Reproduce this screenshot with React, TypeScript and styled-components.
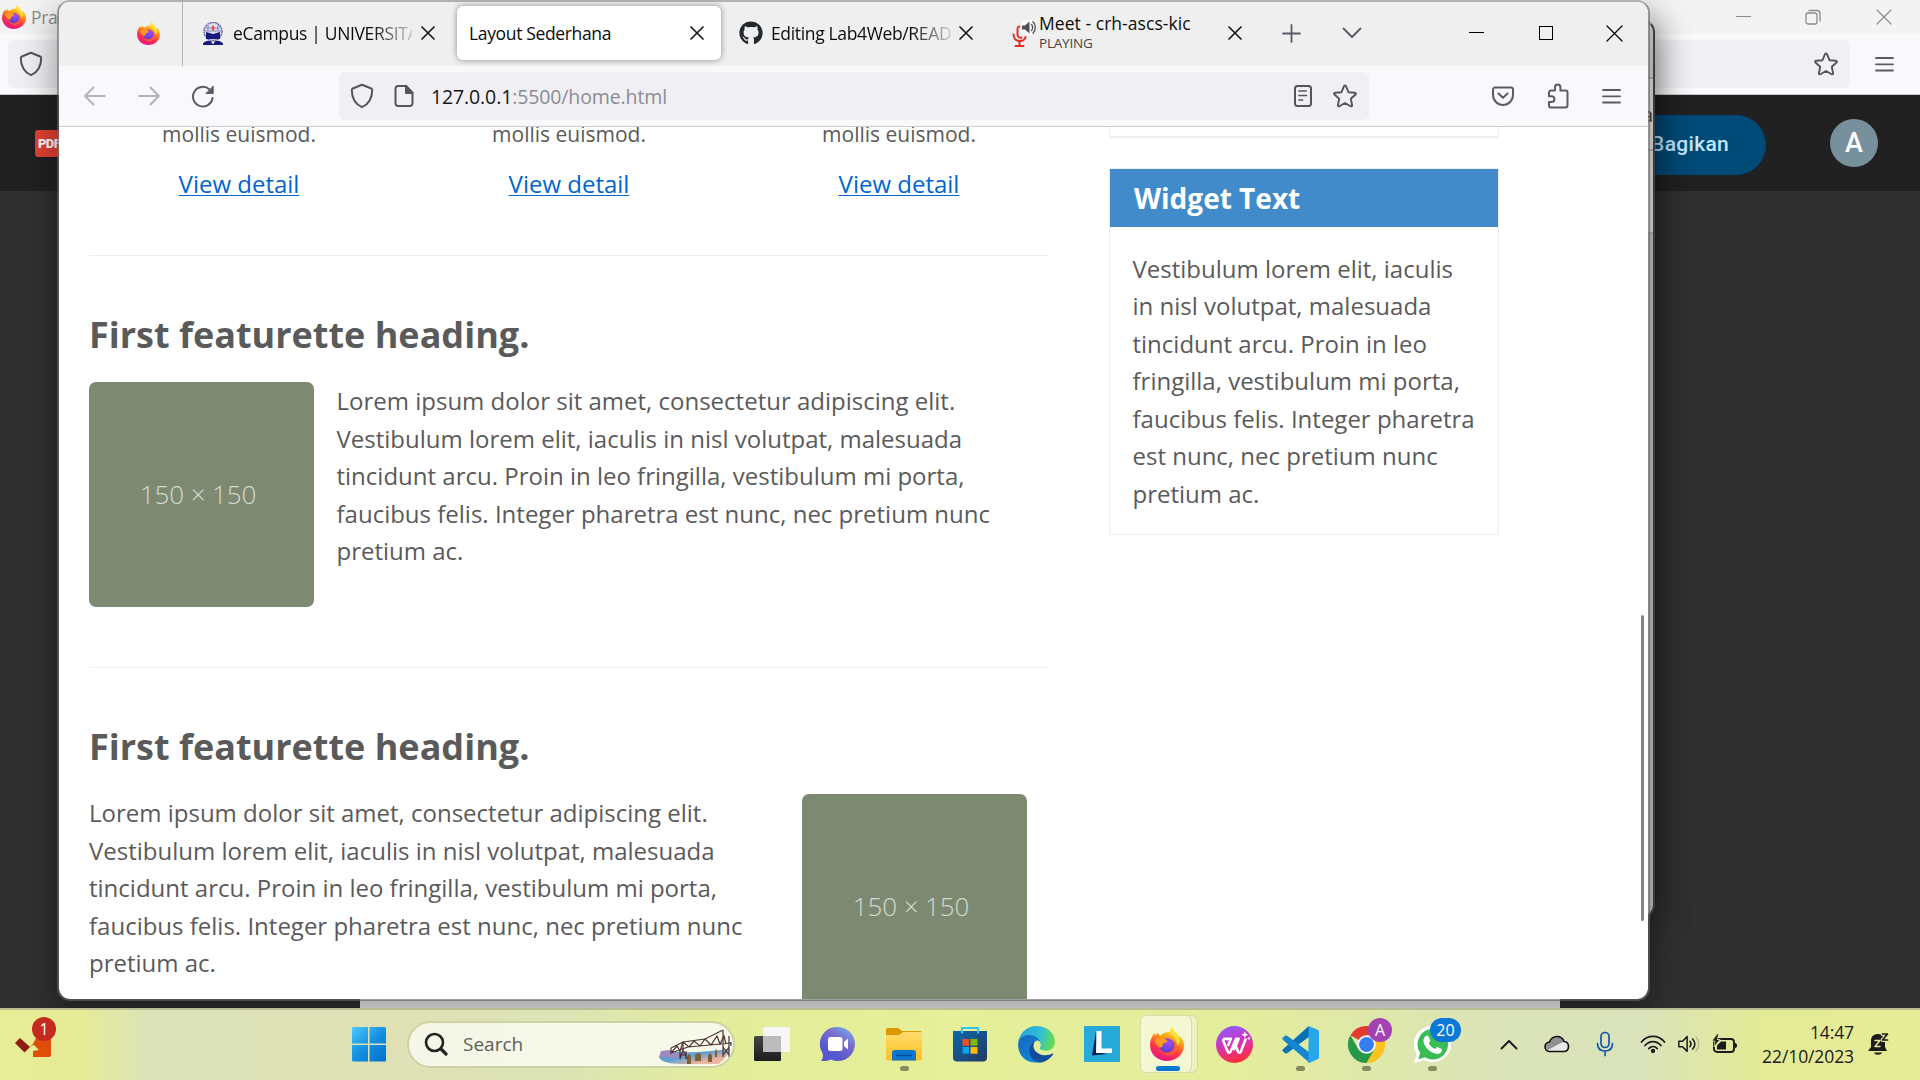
import React from "react";
import styled, { createGlobalStyle } from "styled-components";
import { FaGithub } from "react-icons/fa";

const GlobalStyle = createGlobalStyle`
  * { box-sizing: border-box; }
  body { margin: 0; overflow: hidden; }
`;

const ui = `"Open Sans", "Noto Sans", sans-serif`;

/* ---------- desktop and windows ---------- */

const Desktop = styled.div`
  position: relative;
  width: 1920px;
  height: 1080px;
  overflow: hidden;
  background: #303030;
  font-family: ${ui};
  display: flex;
  flex-direction: column;
`;

const BackWindow = styled.section`
  position: relative;
  height: 1008px;
  display: flex;
  flex-direction: column;
`;

const BackTabs = styled.div`
  height: 34px;
  background: #f3f3f3;
  display: flex;
  align-items: center;
  justify-content: space-between;
  color: #8b8b8b;
  font-size: 17.5px;
  letter-spacing: -0.4px;
`;

const BackTitle = styled.div`
  display: flex;
  align-items: center;
  gap: 5px;
  padding-left: 2px;
`;

const WindowButtons = styled.div`
  display: flex;
  align-items: center;
`;

const BackToolbar = styled.div`
  height: 61px;
  background: #f9f9fb;
  border-bottom: 1px solid #c8c8cc;
  display: flex;
  align-items: center;
  padding: 0 16px 0 8px;
`;

const BackUrl = styled.div`
  height: 48px;
  width: 1842px;
  background: #f0f0f4;
  border-radius: 6px;
  display: flex;
  align-items: center;
  justify-content: space-between;
  padding: 0 12px 0 11px;
`;

const BackHeader = styled.div`
  height: 96px;
  background: #212121;
  display: flex;
  align-items: center;
  justify-content: space-between;
  padding: 0 42px 0 35px;
`;

const PdfBadge = styled.div`
  width: 40px;
  height: 27px;
  border-radius: 3px;
  background: #e34133;
  color: #fff;
  font: 900 13px/27px Roboto, sans-serif;
  letter-spacing: -0.6px;
  padding-left: 3px;
`;

const BackActions = styled.div`
  display: flex;
  align-items: center;
  gap: 64px;
`;

const ShareButton = styled.div`
  width: 190px;
  height: 60px;
  margin-top: 4px;
  border-radius: 30px;
  background: #004a77;
  color: #c2e7ff;
  font: 500 21px/59px Roboto, sans-serif;
  letter-spacing: 0.3px;
  text-align: right;
  padding-right: 37px;
`;

const Avatar = styled.div`
  width: 48px;
  height: 48px;
  border-radius: 50%;
  background: #78909c;
  color: #fff;
  font: 500 27px/49px Roboto, sans-serif;
  text-align: center;
`;

const BackCanvas = styled.div`
  flex: 1;
  background: #303030;
  display: flex;
  justify-content: center;
`;

const Sheet = styled.div`
  width: 1200px;
  background: #fff;
`;

const MiddleWindow = styled.section`
  position: absolute;
  left: 300px;
  top: 20px;
  width: 1355px;
  height: 897px;
  border: 2px solid #a8a8a8;
  border-color: #a8a8a8 #484848 #555 #a8a8a8;
  border-radius: 12px;
  background: #c4c4c4;
  overflow: hidden;
  box-shadow: 0 6px 36px rgba(0, 0, 0, 0.4);
  display: flex;
  flex-direction: column;
`;

const MiddleBand = styled.div<{ $h: number; $bg: string }>`
  height: ${(p) => p.$h}px;
  background: ${(p) => p.$bg};
  border-bottom: 2px solid #b5b5b5;
  display: flex;
  align-items: center;
  justify-content: flex-end;
  color: #444;
  font-size: 20px;
  flex: none;
`;

const FrontWindow = styled.section`
  position: absolute;
  left: 57px;
  top: 0;
  width: 1593px;
  height: 1001px;
  border: 2px solid rgba(100, 100, 100, 0.62);
  border-top-color: #b0b0b0;
  border-radius: 13px;
  background: #fff;
  background-clip: padding-box;
  box-shadow: 0 16px 36px 2px rgba(0, 0, 0, 0.36);
  display: flex;
  flex-direction: column;
  overflow: hidden;
`;

/* ---------- tab strip ---------- */

const TabStrip = styled.div`
  height: 64px;
  flex: none;
  background: #efefef;
  display: flex;
  align-items: center;
  padding-bottom: 2px;
`;

const PinnedTab = styled.div`
  width: 124px;
  height: 64px;
  margin-bottom: -2px;
  border-right: 1px solid #b4b4b4;
  display: flex;
  align-items: center;
  justify-content: flex-end;
  padding: 0 22px 2px 0;
`;

const Tab = styled.div<{ $w: number; $active?: boolean; $left?: number; $gap?: number }>`
  width: ${(p) => p.$w}px;
  flex: none;
  height: 54px;
  margin-left: ${(p) => p.$left ?? 0}px;
  padding: 0 14px 0 12px;
  display: flex;
  align-items: center;
  gap: ${(p) => p.$gap ?? 9}px;
  border-radius: 6px;
  background: ${(p) => (p.$active ? "#fff" : "transparent")};
  box-shadow: ${(p) => (p.$active ? "0 0 6px rgba(0,0,0,.42)" : "none")};
`;

const TabLabel = styled.div<{ $fade?: boolean; $ls?: number }>`
  flex: 1;
  min-width: 0;
  overflow: hidden;
  white-space: nowrap;
  font-size: 17.5px;
  line-height: 24px;
  letter-spacing: ${(p) => p.$ls ?? -0.35}px;
  color: #0c0c0d;
  ${(p) => p.$fade && "mask-image: linear-gradient(to right, #000 calc(100% - 40px), rgba(0,0,0,.15));"}
`;

const MeetLabel = styled(TabLabel)`
  padding-bottom: 4px;
`;

const TabStatus = styled.div`
  font-size: 13.5px;
  line-height: 16px;
  letter-spacing: -0.2px;
  color: #444;
`;

const Slot = styled.div<{ $w: number }>`
  width: ${(p) => p.$w}px;
  flex: none;
  display: flex;
  align-items: center;
  justify-content: center;
`;

const Spacer = styled.div`
  flex: 1;
`;

/* ---------- toolbar ---------- */

const Toolbar = styled.div`
  height: 61px;
  flex: none;
  background: #f9f9fb;
  border-bottom: 1px solid #cccccf;
  display: flex;
  align-items: center;
  padding-left: 9px;
  padding-right: 10px;
`;

const UrlBar = styled.div`
  width: 1030px;
  height: 48px;
  margin-left: 109px;
  border-radius: 6px;
  background: #f0f0f4;
  display: flex;
  align-items: center;
  padding: 0 3px 0 2px;
`;

const UrlText = styled.div`
  flex: 1;
  padding: 1px 0 0 6px;
  font-size: 19.5px;
  letter-spacing: -0.12px;
  color: #8b8b92;
  b { font-weight: 400; color: #15141a; }
`;

/* ---------- web page ---------- */

const Page = styled.main`
  flex: 1;
  min-height: 0;
  overflow: hidden;
  position: relative;
  display: flex;
  padding-left: 30px;
  color: #5a5a5a;
  font-size: 24px;
  line-height: 37.5px;
`;

const MainColumn = styled.div`
  width: 959px;
  flex: none;
`;

const Boxes = styled.div`
  display: grid;
  grid-template-columns: repeat(3, 300px);
  column-gap: 30px;
  height: 128px;
`;

const Box = styled.div`
  text-align: center;
  p { margin: -11px 0 0; font-size: 21px; line-height: 37px; }
  a { display: inline-block; margin-top: 12px; color: #0066cc; text-decoration: underline; text-underline-offset: 2px; text-decoration-thickness: 1px; }
`;

const Divider = styled.hr`
  height: 1px;
  margin: 0;
  border: 0;
  background: #eee;
`;

const Featurette = styled.article`
  height: 411px;
  padding-top: 51px;
`;

const Heading = styled.h2`
  margin: 0 0 20px;
  font-size: 36px;
  line-height: 55px;
  font-weight: 700;
  color: #5a5a5a;
`;

const Row = styled.div<{ $reverse?: boolean }>`
  display: flex;
  flex-direction: ${(p) => (p.$reverse ? "row-reverse" : "row")};
  justify-content: ${(p) => (p.$reverse ? "space-between" : "flex-start")};
  gap: 22.5px;
  padding-right: ${(p) => (p.$reverse ? 21 : 0)}px;
`;

const Placeholder = styled.div`
  width: 225px;
  height: 225px;
  flex: none;
  border-radius: 7px;
  background: #7d8a71;
  color: #d3d9ce;
  font-size: 26px;
  font-weight: 300;
  line-height: 225px;
  text-align: center;
  letter-spacing: -0.1px;
  padding-right: 7px;
`;

const Copy = styled.p`
  width: 670px;
  margin: 0;
`;

const Sidebar = styled.aside`
  width: 390px;
  margin-left: 61px;
`;

const PreviousWidget = styled.div`
  height: 11px;
  border: 1px solid #eee;
  border-top: 0;
  border-bottom-width: 2px;
  margin-bottom: 30px;
`;

const Widget = styled.div`
  height: 367px;
  border: 1px solid #eee;
  h3 { margin: 0; height: 58px; padding-left: 24px; background: #428bca; color: #fff; font-size: 28px; line-height: 58px; }
  p { margin: 0; padding: 22.5px 22.5px 0; }
`;

const ScrollThumb = styled.div`
  position: absolute;
  right: 4px;
  top: 488px;
  width: 3px;
  height: 306px;
  border-radius: 2px;
  background: #858585;
`;

/* ---------- taskbar ---------- */

const Taskbar = styled.footer`
  position: relative;
  height: 72px;
  border-top: 2px solid #b9bc93;
  background: linear-gradient(90deg, #e7ec95 0, #e6ec96 80px, #dbe3b8 150px, #dfe1b5 380px, #dce4b5 560px, #e2ec9b 720px, #e6ef98 900px, #e3ed9c 1240px, #dbe3b8 1500px, #dae2bb 1640px, #e3eb96 1760px, #e7eb96 1920px);
  display: flex;
  align-items: center;
  padding-bottom: 2px;
`;

const Notice = styled.div`
  position: relative;
  width: 336px;
  height: 70px;
  padding: 15px 0 0 15px;
`;

const CountBadge = styled.span<{ $x: number; $y: number; $w: number; $bg: string }>`
  position: absolute;
  left: ${(p) => p.$x}px;
  top: ${(p) => p.$y}px;
  width: ${(p) => p.$w}px;
  height: 24px;
  border-radius: 12px;
  background: ${(p) => p.$bg};
  color: #fff;
  font-size: 16px;
  line-height: 24px;
  text-align: center;
`;

const Search = styled.div`
  width: 328px;
  height: 47px;
  margin: 0 4px 0 5px;
  border: 2px solid #ccd2a3;
  border-radius: 24px;
  background: linear-gradient(90deg, #f5f6e8, #f8fae9);
  display: flex;
  align-items: center;
  padding-left: 15px;
  color: #5d5e58;
  font-size: 19px;
  overflow: hidden;
  span { flex: 1; padding-left: 15px; line-height: 44px; }
`;

const AppSlot = styled.div<{ $open?: boolean; $focus?: boolean }>`
  position: relative;
  width: 66px;
  height: 70px;
  display: flex;
  align-items: center;
  justify-content: center;
  &::after {
    content: "";
    position: absolute;
    bottom: 8px;
    left: ${(p) => (p.$focus ? 21 : 28.5)}px;
    width: ${(p) => (p.$focus ? 24 : 9)}px;
    height: 5px;
    border-radius: 3px;
    background: ${(p) => (p.$focus ? "#0078d4" : "#858a5f")};
    display: ${(p) => (p.$open || p.$focus ? "block" : "none")};
  }
`;

const FocusTile = styled.div`
  width: 52px;
  height: 58px;
  margin-right: 4px;
  padding-left: 2px;
  border: 1px solid #d8deb0;
  border-radius: 6px;
  background: #f3f7d2;
  box-shadow: 6px 0 0 -1px #edf3c0, 6px 0 0 0 #d3da9f;
  display: flex;
  align-items: center;
  justify-content: center;
`;

const Clock = styled.div`
  width: 105px;
  text-align: right;
  font-size: 17.5px;
  line-height: 24px;
  letter-spacing: -0.1px;
  color: #1b1b1b;
`;

/* ---------- icons ---------- */

const stroke = { fill: "none", strokeLinecap: "round", strokeLinejoin: "round" } as const;

const Firefox = ({ size = 23 }: { size?: number }) => {
  const id = React.useId();
  return (
    <svg width={size} height={size} viewBox="0 0 34 34">
      <defs>
        <linearGradient id={id + "a"} x1=".75" y1=".05" x2=".35" y2="1">
          <stop offset="0" stopColor="#fff44f" /><stop offset=".35" stopColor="#ff980e" />
          <stop offset=".65" stopColor="#ff3647" /><stop offset="1" stopColor="#e31587" />
        </linearGradient>
        <radialGradient id={id + "b"} cx=".6" cy=".3" r=".8">
          <stop offset="0" stopColor="#a64bf4" /><stop offset="1" stopColor="#4b3dcf" />
        </radialGradient>
      </defs>
      <path d="M20 5C20 3 21 1 22.500 0c.3 3 2 4.600 4.500 7 1 1 1.500 2 1.900 3l1-1C32.500 12 34 15 34 18.500 34 27 26.500 34 17 34S0 27 0 18c0-5 2-9 4.800-12 .2 1 .5 2 .9 2.600L8 5.500c.4 1.500 1 2.500 2.400 3.400C13 6 16 5 20 5z" fill={`url(#${id}a)`} />
      <path d="M22.500 0c-2.500 2-3 5-2 7 3 2 7 6 6 13 3-3 4-6 2.400-10-.7-2-1.900-3-3-4C24 4.500 22.700 3 22.500 0z" fill="#ffe03a" />
      <circle cx="17" cy="18.500" r="7.300" fill={`url(#${id}b)`} />
      <path d="M5 13c3-3 6-3 9-1.500l3 1.500c1 2-1.500 2.500-3.500 3.500-1.500 1 0 4-3 4C7 20 5 16 5 13z" fill="#ff9a22" />
      <path d="M8.500 20c1 5 9 8 14 3 3-3 2-8-.5-10 7 2 7 10 2 14-6 4-15 0-15.500-7z" fill="#ff5a36" opacity=".75" />
    </svg>
  );
};

const Cross = ({ s = 12, c = "#1a1a1a", w = 1.7 }: { s?: number; c?: string; w?: number }) => (
  <svg width={s + 2} height={s + 2} viewBox={`-1 -1 ${s + 2} ${s + 2}`} {...stroke} stroke={c} strokeWidth={w}>
    <path d={`M0 0L${s} ${s}M${s} 0L0 ${s}`} />
  </svg>
);

const Shield = () => (
  <svg width="24" height="26" viewBox="0 0 24 26" {...stroke} stroke="#55545c" strokeWidth="2">
    <path d="M12 1.800L2.800 5.500c-.7.300-1 .8-1 1.500C1.800 15 5 21 12 24.200 19 21 22.200 15 22.200 7c0-.7-.3-1.200-1-1.500z" />
  </svg>
);

const PageIcon = () => (
  <svg width="20" height="22" viewBox="0 0 20 22" {...stroke} stroke="#55545c" strokeWidth="2">
    <path d="M12 1H4a2.500 2.500 0 0 0-2.500 2.500v15A2.500 2.500 0 0 0 4 21h12a2.500 2.500 0 0 0 2.500-2.500V8z" />
    <path d="M12 1v7h6.500z" fill="#55545c" />
  </svg>
);

const Reader = () => (
  <svg width="20" height="22" viewBox="0 0 20 22" {...stroke} stroke="#55545c" strokeWidth="2">
    <rect x="2" y="1" width="16" height="20" rx="2.500" />
    <path d="M6 6h7M6 10.500h7.500M6 15h3.500" strokeWidth="1.700" />
  </svg>
);

const Star = () => (
  <svg width="24" height="24" viewBox="0 0 24 24" {...stroke} stroke="#55545c" strokeWidth="1.900">
    <path d="M12 1.500c.5 0 .8.300 1 .7l2.500 6 6.400.600c1 .1 1.300 1 .6 1.700l-4.700 4.300 1.300 6.400c.2.900-.7 1.500-1.500 1L12 19l-5.600 3.200c-.8.500-1.700-.1-1.500-1l1.300-6.400-4.700-4.300c-.7-.7-.4-1.600.6-1.700l6.400-.6 2.500-6c.2-.4.500-.7 1-.7z" />
  </svg>
);

const Arrow = ({ flip }: { flip?: boolean }) => (
  <svg width="24" height="20" viewBox="0 0 24 20" {...stroke} stroke="#b5b4bc" strokeWidth="1.900">
    {flip ? <path d="M2 10h20M13.500 1.500L22 10l-8.500 8.500" /> : <path d="M22 10H2M10.500 1.500L2 10l8.500 8.500" />}
  </svg>
);

const Reload = () => (
  <svg width="24" height="24" viewBox="0 0 24 24" {...stroke} stroke="#5b5b66" strokeWidth="2">
    <path d="M21.500 14a9.800 9.800 0 1 1-3-8.500" />
    <path d="M22.200 2.500v7h-7z" fill="#5b5b66" strokeWidth="1" />
  </svg>
);

const Menu = () => (
  <svg width="19" height="17" viewBox="0 0 19 17" {...stroke} stroke="#5b5b66" strokeWidth="1.800">
    <path d="M1 2h17M1 8.300h17M1 14.500h17" />
  </svg>
);

const Pocket = () => (
  <svg width="22" height="20" viewBox="0 0 22 20" {...stroke} stroke="#5b5b66" strokeWidth="2">
    <path d="M3 1.500h16a2 2 0 0 1 2 2V9a10 10 0 0 1-20 0V3.500a2 2 0 0 1 2-2z" />
    <path d="M6.500 7.500l4.500 4.300 4.500-4.300" />
  </svg>
);

const Puzzle = () => (
  <svg width="22" height="26" viewBox="0 0 22 26" {...stroke} stroke="#5b5b66" strokeWidth="2">
    <path d="M4 7.500h4V4.300a2.700 2.700 0 0 1 5.400 0v3.200H18.500a2 2 0 0 1 2 2V22.500a2 2 0 0 1-2 2H4a2 2 0 0 1-2-2V19h2.500a2.900 2.900 0 0 0 0-5.800H2V9.500a2 2 0 0 1 2-2z" />
  </svg>
);

const Campus = () => (
  <svg width="22" height="23" viewBox="0 0 22 23">
    <circle cx="11" cy="9.500" r="9" fill="#dfe0ee" stroke="#5c5f9c" strokeWidth="1.300" strokeDasharray="2 .6" />
    <path d="M6 3v6M16 3v6M3 9h16M4 6h14" stroke="#8285b8" strokeWidth="1" />
    <path d="M4 10l7 2 7-2v7H4zM1 21.500c3-4 7-3 10-1.500 3-1.500 7-2.500 10 1.500V23H1z" fill="#17197c" />
    <path d="M11 3c2 3 2 4 0 6-2-2-1.500-4 0-6z" fill="#ea4a36" />
    <circle cx="11" cy="20.500" r="1.300" fill="#fff" />
  </svg>
);

const MeetMic = () => (
  <svg width="26" height="30" viewBox="0 0 26 30">
    <g {...stroke} stroke="#e52a22" strokeWidth="1.900">
      <path d="M8 8.500c-1.600 0-2.500 1-2.500 2.500v6a3 3 0 0 0 4 2.500M1.500 16.500c.5 4.500 3 6.500 6 6.500s5.500-1.500 6-4M7.500 23v4.500M3.500 28h8" />
    </g>
    <circle cx="16.500" cy="9.500" r="8.300" fill="#fafafa" />
    <path d="M10 7.500h3l4.500-4v12l-4.500-4h-3z" fill="#4f4f59" />
    <path d="M19.500 6.500c1.500 1.500 1.500 4.500 0 6M21 3.800c3 3 3 8.400 0 11.400" {...stroke} stroke="#4f4f59" strokeWidth="1.400" />
  </svg>
);

const WinLogo = () => (
  <svg width="36" height="36" viewBox="0 0 36 36">
    <defs><linearGradient id="win" gradientUnits="userSpaceOnUse" x1="2" y1="0" x2="34" y2="36"><stop stopColor="#4cc9ff" /><stop offset=".5" stopColor="#1491e0" /><stop offset="1" stopColor="#0070cf" /></linearGradient></defs>
    <path d="M2.500 1H17v16.500H1V2.500A1.500 1.500 0 0 1 2.500 1zM18.500 1h15A1.500 1.500 0 0 1 35 2.500v15H18.500zM1 19h16v16.500H2.500A1.500 1.500 0 0 1 1 34zM18.500 19H35v15a1.500 1.500 0 0 1-1.500 1.500h-15z" fill="url(#win)" />
  </svg>
);

const Bridge = () => (
  <svg width="75" height="43" viewBox="0 0 75 43">
    <defs>
      <linearGradient id="sea" x1="0" x2="1" y1="0" y2="1"><stop stopColor="#6ca1d3" /><stop offset=".45" stopColor="#5ca1d2" /><stop offset=".75" stopColor="#efb59b" /><stop offset="1" stopColor="#e9bcae" /></linearGradient>
    </defs>
    <path d="M1 34c5-5 10-6 22-5 14 1 30-1 49-3-2 5-5 11-12 15H22C10 41 2 38 1 34z" fill="url(#sea)" />
    <path d="M1 34l2-6 8-1 8 3 10 2-10 3z" fill="#9e8ac0" />
    <g fill="none" stroke="#4b3034" strokeWidth="1.200">
      <path d="M13 30L30 24l43-4M13 25L25 19l22-3L65 7M13 25v5l6-7 3 5 3-9 6 5 5-6 6 5 5-7 6 6 6-9 3 8 4-8 2 8" />
      <path d="M65 7v27M71 13v21M73 19v4M65 24l6 8M71 24l-6 8M25 19v8M22 36l3-9 4 9M22 28v8M28 28v8M22 32h6" />
    </g>
    <g fill="#80603b"><path d="M29 41v-8l2-2 2 2v8zM37 38v-6l2-2 4 1v7zM50 39v-7l2-2 2 2v7zM57 34v-6l1-2 1 2v6z" /></g>
  </svg>
);

const TaskView = () => (
  <svg width="38" height="36" viewBox="0 0 38 36">
    <defs><linearGradient id="tv" x2="0" y2="1"><stop stopColor="#444" /><stop offset="1" stopColor="#1d1d1d" /></linearGradient></defs>
    <rect x="1" y="10" width="27" height="25" rx="1.500" fill="url(#tv)" />
    <rect x="10" y="1" width="27" height="25" rx="1.500" fill="#f6f6f6" />
    <path d="M10 10h18v16H11.500a1.500 1.500 0 0 1-1.500-1.500z" fill="#bcbcbc" />
  </svg>
);

const Chat = () => (
  <svg width="36" height="36" viewBox="0 0 36 36">
    <defs><linearGradient id="chat" x1=".9" y1=".1" x2=".4" y2=".8"><stop stopColor="#75a6ec" /><stop offset=".45" stopColor="#7b6ccc" /><stop offset="1" stopColor="#5558cf" /></linearGradient></defs>
    <path d="M18 1a17 17 0 1 1-7 32.500c-3 1.500-7 1.800-10 1.500 2-2.500 2.300-5 1.500-8A17 17 0 0 1 18 1z" fill="url(#chat)" />
    <rect x="8" y="11" width="14.500" height="14" rx="2.500" fill="#fff" />
    <path d="M24 16l4-3.500v11L24 20z" fill="#fff" />
  </svg>
);

const Explorer = () => (
  <svg width="38" height="36" viewBox="0 0 38 36">
    <defs><linearGradient id="fold" x2="0" y2="1"><stop stopColor="#ffdc6d" /><stop offset="1" stopColor="#fcc020" /></linearGradient></defs>
    <path d="M1 3.500A1.500 1.500 0 0 1 2.500 2H13l4 3h18a2 2 0 0 1 2 2v5H1z" fill="#dc9800" />
    <path d="M1 9h13l4-3h19v27a1.500 1.500 0 0 1-1.500 1.500h-33A1.500 1.500 0 0 1 1 33z" fill="url(#fold)" />
    <path d="M7 34.500V27a3 3 0 0 1 3-3h18a3 3 0 0 1 3 3v7.500z" fill="#0f74cc" />
    <path d="M12 29.500h14" stroke="#064b98" strokeWidth="1.600" strokeLinecap="round" />
  </svg>
);

const Store = () => (
  <svg width="36" height="36" viewBox="0 0 36 36">
    <defs><linearGradient id="store" x2="1" y2="1"><stop stopColor="#0b67ad" /><stop offset="1" stopColor="#24395f" /></linearGradient></defs>
    <path d="M1 5h34v26.500A4 4 0 0 1 31 35.500H5a4 4 0 0 1-4-4z" fill="url(#store)" />
    <path d="M10 7.500V2h16v5.500" fill="none" stroke="#32c5f1" strokeWidth="2" />
    <path d="M10.500 13H17v6.700h-6.500z" fill="#f25022" /><path d="M18.500 13h7v6.700h-7z" fill="#7fba00" />
    <path d="M10.500 21H17v6.700h-6.500z" fill="#00a4ef" /><path d="M18.500 21h7v6.700h-7z" fill="#ffb900" />
  </svg>
);

const Edge = () => (
  <svg width="37" height="37" viewBox="0 0 36 36">
    <defs>
      <linearGradient id="e1" x1="0" y1=".3" x2="1" y2=".5"><stop stopColor="#229fdf" /><stop offset=".6" stopColor="#34c1d2" /><stop offset="1" stopColor="#66dc4c" /></linearGradient>
      <linearGradient id="e2" x2=".5" y2="1"><stop stopColor="#1b66b5" /><stop offset="1" stopColor="#0b86dc" /></linearGradient>
    </defs>
    <path d="M0 17C1 7 8.500 0 18 0c10 0 18 7 18 15 0 6-4 9-9 9-4 0-6.500-1.500-5.500-3 2-3 0-7-5-8.500C10 10 2 12 0 17z" fill="url(#e1)" />
    <path d="M0 18C1 11 7 8 13 9c5 .8 8 4 8.500 6-3-2-6 0-7 4-1 6 2 13 8 16C10 38 0 30 0 18z" fill="url(#e2)" />
    <path d="M16 15c-2 1-5.500 5-5 10 .5 7 7 11 12 10.500 5-1 8.500-4 11-7.500.5-1 0-1.400-1-1-6 3-14 1-17-4-1.500-3-1-6 0-8z" fill="#114f9c" />
  </svg>
);

const LTile = styled.div`
  width: 36px;
  height: 36px;
  background: #27a9da;
`;

const Wps = () => (
  <svg width="37" height="37" viewBox="0 0 36 36">
    <defs><linearGradient id="wps" x1=".3" x2=".6" y2="1"><stop stopColor="#8b5bff" /><stop offset=".5" stopColor="#d832b4" /><stop offset="1" stopColor="#ff3030" /></linearGradient></defs>
    <circle cx="18" cy="18" r="18" fill="url(#wps)" />
    <path d="M14.500 12.500H9c-1.800 0-2.300 1.200-1.700 2.600l4.200 10c.5 1.300 2 1.300 2.600 0l5.400-12.600h2.500l-2.700 7 2.200 5.600c.5 1.300 2 1.300 2.600 0l4.600-12M12 18.500l2.500-6M22 12.500l-4.500 10" fill="none" stroke="#fff" strokeWidth="2.500" strokeLinejoin="round" strokeLinecap="round" />
    <path d="M28 5l1 2.500 2.500 1-2.500 1-1 2.500-1-2.500-2.500-1 2.500-1zM32 10l.6 1.500 1.400.5-1.400.6L32 14l-.6-1.400L30 12l1.400-.5z" fill="#fff" />
  </svg>
);

const Code = () => (
  <svg width="37" height="37" viewBox="0 0 36 36">
    <path d="M26 0L1 22.500a1.500 1.500 0 0 0 0 2.300l2 1.700c.6.500 1.400.5 2 0L27 10z" fill="#0a70b8" />
    <path d="M27 36L1 13.500a1.500 1.500 0 0 1 0-2.300L3 9.500c.6-.5 1.400-.5 2 0L27 26z" fill="#1685cf" />
    <path d="M26 0l9 4a2 2 0 0 1 1 1.800v24.400a2 2 0 0 1-1 1.800l-8.500 4c-.8.300-1 0-1-.8z" fill="#27a5ee" />
  </svg>
);

const Chrome = () => (
  <svg width="37" height="37" viewBox="0 0 36 36">
    <path d="M18 18L2.400 9A18 18 0 0 1 33.600 9z" fill="#e33b2e" />
    <path d="M18 9h15.600A18 18 0 0 1 18 36l7.800-13.500z" fill="#fcc31e" />
    <path d="M18 18l7.800 4.500L18 36A18 18 0 0 1 2.400 9l7.800 13.500z" fill="#279847" />
    <circle cx="18" cy="18" r="9" fill="#fff" /><circle cx="18" cy="18" r="7.200" fill="#377df0" />
  </svg>
);

const WhatsApp = () => (
  <svg width="37" height="37" viewBox="0 0 36 36">
    <path d="M18 0a18 17.600 0 1 1-8 33.300L0 36l2.600-9A17.600 17.600 0 0 1 18 0z" fill="#fff" />
    <path d="M18.300 3a14.800 14.800 0 1 1-7.600 27.500L4.300 32.300 6 26A14.800 14.800 0 0 1 18.300 3z" fill="#37bd54" />
    <path d="M12 9.500c.8-.4 1.800-.2 2.200.7l1.600 3.800c.3.800-.9 2-1.500 2.700 1.400 2.600 3.400 4.500 6.200 5.600.7-.7 1.500-2.200 2.400-1.900l3.900 1.900c.8.500.3 2.300-.4 3.200-1.200 1.300-3 1.900-4.900 1.500C15 25.500 10.500 21 9.200 15.200 9 12.500 10.300 10.200 12 9.500z" fill="#fff" />
  </svg>
);

const Cloud = () => (
  <svg width="26" height="18" viewBox="0 0 26 18">
    <path d="M6 16.500A4.700 4.700 0 0 1 5.500 7C7 3 10 1.500 13 1.500c3.500 0 6 2 7 5 3 .2 4.500 2.500 4.500 5 0 3-2 5-5 5z" fill="#e8e8e8" />
    <path d="M5.500 7C7 3 10 1.500 13 1.500c3.500 0 6 2 7 5L13 10 4 15C0 13 1 8 5.500 7z" fill="#919191" />
    <path d="M6 16.500A4.700 4.700 0 0 1 5.500 7C7 3 10 1.500 13 1.500c3.500 0 6 2 7 5 3 .2 4.500 2.500 4.500 5 0 3-2 5-5 5z" fill="none" stroke="#111" strokeWidth="1.600" />
  </svg>
);

const TrayMic = () => (
  <svg width="18" height="26" viewBox="0 0 18 26" {...stroke} stroke="#1458a6" strokeWidth="1.700">
    <rect x="5" y="1.500" width="8" height="15" rx="4" /><path d="M1.500 12.500c0 5 3 7.500 7.500 7.500s7.500-2.500 7.500-7.500M9 20v4.500" />
  </svg>
);

const Wifi = () => (
  <svg width="26" height="20" viewBox="0 0 26 20" {...stroke} stroke="#1b1b1b" strokeWidth="1.700">
    <path d="M1.500 8c6-7.500 17-7.500 23 0M5 11.500c4.500-5.300 11.500-5.300 16 0M8.700 14.600c2.500-2.800 6.100-2.800 8.600 0" /><circle cx="13" cy="17" r="1.300" fill="#1b1b1b" />
  </svg>
);

const Speaker = () => (
  <svg width="26" height="20" viewBox="0 0 26 20" {...stroke} stroke="#1b1b1b" strokeWidth="1.600">
    <path d="M2 7h4l5-5v16l-5-5H2z" /><path d="M14 7c1.600 2 1.600 4 0 6M17 4.500c3 3.500 3 7.500 0 11" /><path d="M20.500 2c4 5 4 11 0 16" stroke="#b9bd90" />
  </svg>
);

const Battery = () => (
  <svg width="26" height="20" viewBox="0 0 26 20">
    <rect x="2" y="5" width="20" height="13" rx="3" fill="none" stroke="#1b1b1b" strokeWidth="1.900" />
    <path d="M5 15.500v-4l4-4h5v8zM23 9c1.500 0 2 1 2 2.500s-.5 2.500-2 2.500z" fill="#1b1b1b" />
    <path d="M5 0L0 7h3l-1 6 6-7.500H5L7 0z" fill="#1b1b1b" stroke="#dfe7a5" strokeWidth=".8" />
  </svg>
);

const Bell = () => (
  <svg width="24" height="26" viewBox="0 0 24 26">
    <path d="M4 10c0-5 3-7 7-7 5 0 7 3 7 7v6l2 4H1l3-4zM7 21.500h8c-1 3-7 3-8 0z" fill="#1b1b1b" />
    <path d="M8 9.500h5l-5 6h5" {...stroke} stroke="#e5ec97" strokeWidth="1.500" />
    <path d="M15.500 3h5l-5 6h5" {...stroke} stroke="#e5ec97" strokeWidth="4" />
    <path d="M15.500 3h5l-5 6h5" {...stroke} stroke="#1b1b1b" strokeWidth="1.700" />
  </svg>
);

/* ---------- composition ---------- */

const filler =
  "Vestibulum lorem elit, iaculis in nisl volutpat, malesuada tincidunt arcu. Proin in leo fringilla, vestibulum mi porta, faucibus felis. Integer pharetra est nunc, nec pretium nunc pretium ac.";

const Feature = ({ reverse }: { reverse?: boolean }) => (
  <>
    <Divider />
    <Featurette>
      <Heading>First featurette heading.</Heading>
      <Row $reverse={reverse}>
        <Placeholder>150 × 150</Placeholder>
        <Copy>Lorem ipsum dolor sit amet, consectetur adipiscing elit. {filler}</Copy>
      </Row>
    </Featurette>
  </>
);

export default function App() {
  return (
    <Desktop>
      <GlobalStyle />
      <BackWindow>
        <BackTabs>
          <BackTitle><Firefox size={24} />Prak</BackTitle>
          <WindowButtons>
            <Slot $w={69}><svg width="15" height="2"><path d="M0 .5h15" stroke="#8b8b8b" strokeWidth="1" /></svg></Slot>
            <Slot $w={69}>
              <svg width="16" height="16" viewBox="0 0 16 16" {...stroke} stroke="#8b8b8b" strokeWidth="1.300"><rect x="1" y="4" width="11" height="11" rx="2" /><path d="M4 1.500h8a3 3 0 0 1 3 3V12" /></svg>
            </Slot>
            <Slot $w={73}><Cross s={14} c="#8b8b8b" w={1.2} /></Slot>
          </WindowButtons>
        </BackTabs>
        <BackToolbar>
          <BackUrl><Shield /><Star /></BackUrl>
          <Spacer />
          <Slot $w={40}><Menu /></Slot>
        </BackToolbar>
        <BackHeader>
          <PdfBadge>PDF</PdfBadge>
          <BackActions><ShareButton>Bagikan</ShareButton><Avatar>A</Avatar></BackActions>
        </BackHeader>
        <BackCanvas><Sheet /></BackCanvas>
      </BackWindow>

      <MiddleWindow>
        <MiddleBand $h={57} $bg="#d6d6d6" />
        <MiddleBand $h={72} $bg="#e4e4e4">a</MiddleBand>
        <MiddleBand $h={83} $bg="#e0e0e0" />
      </MiddleWindow>

      <FrontWindow>
        <TabStrip>
          <PinnedTab><Firefox size={23} /></PinnedTab>
          <Tab $w={259} $left={7} $gap={9}><Campus /><TabLabel $fade>eCampus | UNIVERSITA</TabLabel><Cross /></Tab>
          <Tab $active $w={264} $left={8}><TabLabel>Layout Sederhana</TabLabel><Slot $w={20}><Cross /></Slot></Tab>
          <Tab $w={260} $left={6} $gap={8}><FaGithub size={24} color="#24292f" /><TabLabel $fade>Editing Lab4Web/READ</TabLabel><Cross /></Tab>
          <Tab $w={256} $left={13} $gap={1}>
            <MeetMic />
            <MeetLabel $ls={0.05}>Meet - crh-ascs-kic<TabStatus>PLAYING</TabStatus></MeetLabel>
            <Cross />
          </Tab>
          <Slot $w={70}><svg width="19" height="19" {...stroke} stroke="#5b5b66" strokeWidth="1.800"><path d="M9.500 1v17M1 9.500h17" /></svg></Slot>
          <Slot $w={52}><svg width="20" height="12" {...stroke} stroke="#5b5b66" strokeWidth="1.900"><path d="M1.500 1.500L10 10l8.500-8.500" /></svg></Slot>
          <Spacer />
          <Slot $w={69}><svg width="15" height="2"><path d="M0 .5h15" stroke="#000" /></svg></Slot>
          <Slot $w={69}><svg width="14" height="14"><rect x=".5" y=".5" width="13" height="13" fill="none" stroke="#000" /></svg></Slot>
          <Slot $w={68}><Cross s={15} c="#000" w={1.2} /></Slot>
        </TabStrip>

        <Toolbar>
          <Slot $w={54}><Arrow /></Slot>
          <Slot $w={54}><Arrow flip /></Slot>
          <Slot $w={54}><Reload /></Slot>
          <UrlBar>
            <Slot $w={42}><Shield /></Slot>
            <Slot $w={42}><PageIcon /></Slot>
            <UrlText><b>127.0.0.1</b>:5500/home.html</UrlText>
            <Slot $w={42}><Reader /></Slot>
            <Slot $w={42}><Star /></Slot>
          </UrlBar>
          <Spacer />
          <Slot $w={54}><Pocket /></Slot>
          <Slot $w={55}><Puzzle /></Slot>
          <Slot $w={53}><Menu /></Slot>
        </Toolbar>

        <Page>
          <MainColumn>
            <Boxes>
              {[0, 1, 2].map((i) => (
                <Box key={i}><p>mollis euismod.</p><a>View detail</a></Box>
              ))}
            </Boxes>
            <Feature />
            <Feature reverse />
          </MainColumn>
          <Sidebar>
            <PreviousWidget />
            <Widget>
              <h3>Widget Text</h3>
              <p>{filler}</p>
            </Widget>
          </Sidebar>
          <ScrollThumb />
        </Page>
      </FrontWindow>

      <Taskbar>
        <Notice>
          <svg width="38" height="34" viewBox="0 0 38 34">
            <path d="M5 14L0 19l9.500 9.500 5.500-5.500z" fill="#8c1d11" /><path d="M9.500 28.500L24 14l6 6-9-1-6.500 4.500z" fill="#cf3a0a" />
            <path d="M22 12h14v19a2 2 0 0 1-2 2H18v-6l6-1-6-6z" fill="#e04e0a" />
          </svg>
          <CountBadge $x={32} $y={8} $w={24} $bg="#c42b1f">1</CountBadge>
        </Notice>
        <AppSlot><WinLogo /></AppSlot>
        <Search>
          <svg width="24" height="24" viewBox="0 0 24 24" {...stroke} stroke="#222" strokeWidth="2.600"><circle cx="10.500" cy="10.500" r="8.500" /><path d="M17 17l5 5" strokeWidth="3.200" /></svg>
          <span>Search</span>
          <Bridge />
        </Search>
        <AppSlot><TaskView /></AppSlot>
        <AppSlot><Chat /></AppSlot>
        <AppSlot $open><Explorer /></AppSlot>
        <AppSlot><Store /></AppSlot>
        <AppSlot><Edge /></AppSlot>
        <AppSlot>
          <LTile><svg width="36" height="36" viewBox="0 0 36 36"><path d="M12 5L8 29.500l15-1.500-9-2z" fill="#0c2454" /><path d="M12.500 5h5v17.500H28V27H12z" fill="#fff" /></svg></LTile>
        </AppSlot>
        <AppSlot $focus><FocusTile><Firefox size={34} /></FocusTile></AppSlot>
        <AppSlot><Wps /></AppSlot>
        <AppSlot $open><Code /></AppSlot>
        <AppSlot $open><Chrome /><CountBadge $x={35} $y={9} $w={24} $bg="#a541b3">A</CountBadge></AppSlot>
        <AppSlot $open><WhatsApp /><CountBadge $x={31} $y={9} $w={31} $bg="#0a78d4">20</CountBadge></AppSlot>
        <Spacer />
        <Slot $w={48}><svg width="18" height="11" {...stroke} stroke="#1b1b1b" strokeWidth="1.900"><path d="M1.500 9.500L9 2l7.500 7.500" /></svg></Slot>
        <Slot $w={48}><Cloud /></Slot>
        <Slot $w={48}><TrayMic /></Slot>
        <Slot $w={48}><Wifi /></Slot>
        <Slot $w={24}><Speaker /></Slot>
        <Slot $w={48}><Battery /></Slot>
        <Clock>14:47<br />22/10/2023</Clock>
        <Slot $w={49}><Bell /></Slot>
        <Slot $w={17} />
      </Taskbar>
    </Desktop>
  );
}
